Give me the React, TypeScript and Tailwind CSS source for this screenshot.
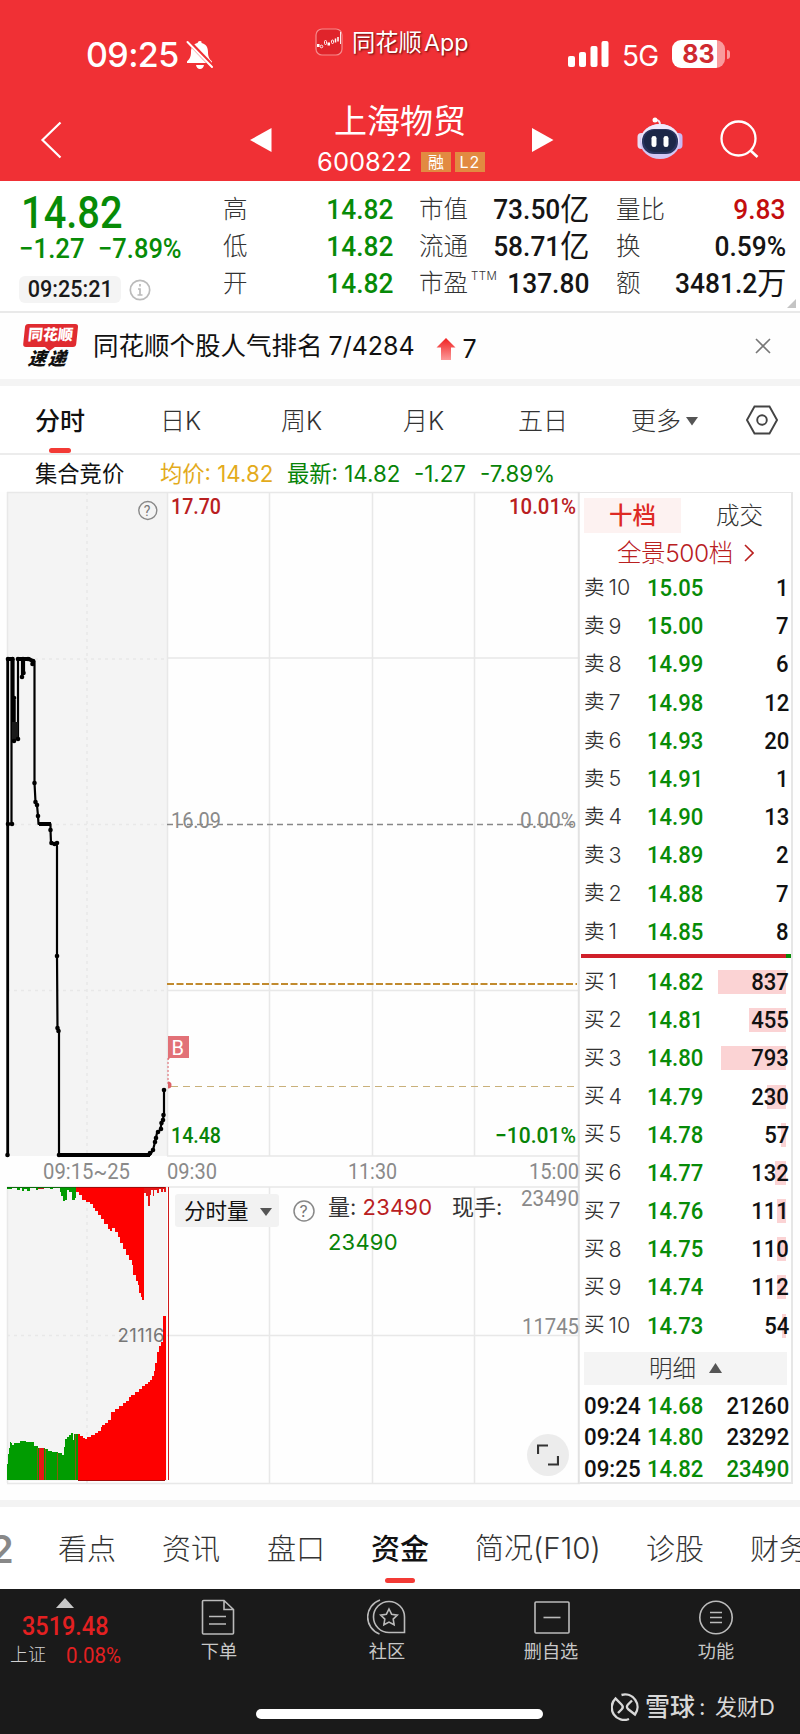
import React from 'react';

const UI = 'font-[Inter,"Noto_Sans_CJK_SC",sans-serif]';
const DIN = 'font-[Roboto,"Noto_Sans_CJK_SC",sans-serif]';

interface Level {
  label: string;
  price: string;
  qty: number;
  bar: number;
}

const asks: Level[] = [
  { label: '10', price: '15.05', qty: 1, bar: 0 },
  { label: '9', price: '15.00', qty: 7, bar: 0 },
  { label: '8', price: '14.99', qty: 6, bar: 0 },
  { label: '7', price: '14.98', qty: 12, bar: 0 },
  { label: '6', price: '14.93', qty: 20, bar: 0 },
  { label: '5', price: '14.91', qty: 1, bar: 0 },
  { label: '4', price: '14.90', qty: 13, bar: 0 },
  { label: '3', price: '14.89', qty: 2, bar: 0 },
  { label: '2', price: '14.88', qty: 7, bar: 0 },
  { label: '1', price: '14.85', qty: 8, bar: 0 },
];

const bids: Level[] = [
  { label: '1', price: '14.82', qty: 837, bar: 68 },
  { label: '2', price: '14.81', qty: 455, bar: 37 },
  { label: '3', price: '14.80', qty: 793, bar: 65 },
  { label: '4', price: '14.79', qty: 230, bar: 19 },
  { label: '5', price: '14.78', qty: 57, bar: 5 },
  { label: '6', price: '14.77', qty: 132, bar: 11 },
  { label: '7', price: '14.76', qty: 111, bar: 9 },
  { label: '8', price: '14.75', qty: 110, bar: 9 },
  { label: '9', price: '14.74', qty: 112, bar: 9 },
  { label: '10', price: '14.73', qty: 54, bar: 4 },
];

const ticks = [
  { time: '09:24', price: '14.68', qty: '21260', color: 'text-[#111]' },
  { time: '09:24', price: '14.80', qty: '23292', color: 'text-[#111]' },
  { time: '09:25', price: '14.82', qty: '23490', color: 'text-[#078307]' },
];

const StatusBar = () => (
  <div className="flex h-[96px] items-start text-white">
    <div className="ml-[86px] mt-[33px] flex h-[44px] w-[229px] items-center">
      <span className="w-[93px] text-[34px] font-[550] tracking-[-0.6px]">09:25</span>
      <svg className="ml-[7px]" width="28" height="30" viewBox="0 0 28 30">
        <path d="M14 1c-2 0-2 1.500-2.500 2C7 4 5 7 5 12c0 5-1.500 7-4 9.500V23h25v-1.500c-2.500-2.500-4-4.500-4-9.500 0-5-2-8-6.500-9C15.500 2.500 16 1 14 1zM10 25h8c-.5 2.500-2 4-4 4s-3.500-1.500-4-4z" fill="white" />
        <path d="M2 1l26 27" stroke="#f03035" strokeWidth="4.500" />
        <path d="M1.500 2l24.500 25" stroke="white" strokeWidth="2" strokeLinecap="round" />
      </svg>
    </div>
    <div className="mt-[26px] flex h-[32px] w-[253px] items-center">
      <svg width="28" height="28" viewBox="0 0 28 28">
        <rect x="1" y="1" width="26" height="26" rx="6" fill="#e0242b" stroke="#f58a8c" strokeWidth="1.200" />
        <path d="M2 17.500h2.500M12.500 16h2.500" stroke="white" strokeWidth="3" />
        <path d="M20.500 10.500v4M23 9v4.500" stroke="white" strokeWidth="1.500" />
        <g fill="none" stroke="white" strokeWidth="0.900">
          <circle cx="6.500" cy="18.500" r="1.300" />
          <rect x="9.500" y="12.500" width="2" height="4" rx="1" />
          <rect x="16.500" y="12" width="2" height="3.500" rx="1" />
          <path d="M25.500 4v12" />
        </g>
      </svg>
      <span className="ml-[9px] mt-[2px] text-[23.300px] [text-shadow:1px_1px_2px_rgba(60,0,0,0.8)]">同花顺<span className="ml-[2px]">App</span></span>
    </div>
    <div className="mt-[38px] flex h-[32px] items-center">
      <svg width="42" height="26" viewBox="0 0 42 26" fill="white">
        <rect x="0" y="15" width="7" height="11" rx="2" />
        <rect x="11" y="11" width="7" height="15" rx="2" />
        <rect x="22.500" y="5" width="7" height="21" rx="2" />
        <rect x="33.500" y="0" width="7" height="26" rx="2" />
      </svg>
      <span className="ml-[12px] mt-[3px] w-[39px] text-[28px] tracking-[-0.8px]">5G</span>
      <div className="ml-[11px] flex h-[28px] w-[53px] items-center justify-center rounded-[9px] bg-[linear-gradient(90deg,#fff_84%,#f99a9c_84%)]">
        <span className="text-[25px] font-bold leading-none text-[#cf2a30]">83</span>
      </div>
      <div className="ml-[2px] h-[9px] w-[3px] rounded-r-full bg-[#f99a9c]" />
    </div>
  </div>
);

const Robot = () => (
  <svg width="46" height="43" viewBox="0 0 46 43">
    <path d="M23 8c0-3-1-5-4-5" fill="none" stroke="#eee6f5" strokeWidth="2" />
    <circle cx="18" cy="3" r="2.500" fill="#fff" />
    <rect x="0.500" y="16" width="8" height="16" rx="4" fill="#e8dcf3" />
    <rect x="37.500" y="16" width="8" height="16" rx="4" fill="#c9b9f2" />
    <ellipse cx="23" cy="24.500" rx="20" ry="17.500" fill="#d3c6f4" />
    <ellipse cx="23" cy="22" rx="19" ry="15" fill="#efe9fb" />
    <rect x="5" y="12" width="36" height="25" rx="12" fill="#2b3560" />
    <rect x="7" y="13" width="32" height="22" rx="11" fill="#1d2748" />
    <rect x="14.500" y="19" width="5" height="11" rx="2.300" fill="white" />
    <rect x="26.500" y="19" width="5" height="11" rx="2.300" fill="white" />
  </svg>
);

const TitleBar = () => (
  <div className="flex h-[85px] items-start text-white">
    <svg className="ml-[40px] mt-[25px]" width="22" height="38" viewBox="0 0 22 38">
      <path d="M20.500 1.500L2.500 19l18 17.500" fill="none" stroke="white" strokeWidth="2.200" />
    </svg>
    <svg className="ml-[188px] mt-[32px]" width="22" height="24" viewBox="0 0 22 24">
      <path d="M0 12L21.500 0v24z" fill="white" />
    </svg>
    <div className="ml-[38px] mt-[6px] flex w-[180px] flex-col items-center">
      <div className="h-[47px] text-[33px] leading-[39px]">上海物贸</div>
      <div className="ml-[2px] flex h-[26px] items-center text-[25.500px]">
        <span className="mr-[9px]">600822</span>
        <span className="mr-[4px] h-[20px] w-[30px] bg-[#e28a41] text-center text-[16px] leading-[20px]">融</span>
        <span className="h-[20px] w-[30px] bg-[#e28a41] text-center text-[16px] leading-[20px] tracking-[1px]">L2</span>
      </div>
    </div>
    <svg className="ml-[42px] mt-[32px]" width="22" height="24" viewBox="0 0 22 24">
      <path d="M21.500 12L0 0v24z" fill="white" />
    </svg>
    <div className="ml-[83px] mt-[21px]"><Robot /></div>
    <svg className="ml-[37px] mt-[24px]" width="39" height="39" viewBox="0 0 39 39">
      <circle cx="18.500" cy="18.500" r="17" fill="none" stroke="white" strokeWidth="2.300" />
      <path d="M30.500 30.500l7 6.500" stroke="white" strokeWidth="2.600" />
    </svg>
  </div>
);

const StatRow = ({ label, sup, value, unit, color = 'text-[#151515]' }: { label: string; sup?: string; value: string; unit?: string; color?: string }) => (
  <div className="flex h-[37px] items-center justify-between">
    <span className="relative whitespace-nowrap text-[24.500px] font-light text-[#333]">
      {label}
      {sup && <span className="absolute left-full top-0 ml-[3px] text-[11.500px] tracking-[0.5px]">{sup}</span>}
    </span>
    <span className={`${DIN} flex origin-right scale-x-[0.94] items-center whitespace-nowrap text-[28px] font-medium ${color}`}>
      {value}
      {unit && <span className="text-[31px] font-normal leading-[28px]">{unit}</span>}
    </span>
  </div>
);

const Quote = () => (
  <div className="relative flex h-[132px] border-b-2 border-[#e9e9e9] bg-white">
    <div className={`w-[223px] pl-[21px] ${DIN} font-medium text-[#078b07]`}>
      <div className="h-[48px] origin-left scale-x-[0.885] pt-[9px] text-[45px] leading-[45px]">14.82</div>
      <div className="flex h-[40px] items-center whitespace-pre text-[28px] leading-[28px]">
        <span className="w-[77px]"><span className="-ml-[2px] inline-block origin-left scale-x-[0.92]">−1.27</span></span>
        <span className="inline-block origin-left scale-x-[0.91]">−7.89%</span>
      </div>
      <div className="mt-[7px] flex items-center">
        <div className="-ml-[2px] flex h-[27px] w-[102px] items-center justify-center rounded-[6px] bg-[#f4f4f4]">
          <span className="scale-x-[0.94] text-[23px] text-[#1a1a1a]">09:25:21</span>
        </div>
        <svg className="ml-[8px]" width="22" height="22" viewBox="0 0 22 22">
          <circle cx="11" cy="11" r="9.700" fill="none" stroke="#bbb" strokeWidth="1.700" />
          <path d="M11 5v2.500M9 10h2v6M8.500 16h5" fill="none" stroke="#bbb" strokeWidth="1.700" />
        </svg>
      </div>
    </div>
    <div className="w-[170px] pt-[10px]">
      <StatRow label="高" value="14.82" color="text-[#078b07]" />
      <StatRow label="低" value="14.82" color="text-[#078b07]" />
      <StatRow label="开" value="14.82" color="text-[#078b07]" />
    </div>
    <div className="ml-[26px] w-[170px] pt-[10px]">
      <StatRow label="市值" value="73.50" unit="亿" />
      <StatRow label="流通" value="58.71" unit="亿" />
      <StatRow label="市盈" sup="TTM" value="137.80" />
    </div>
    <div className="ml-[27px] w-[170px] pt-[10px]">
      <StatRow label="量比" value="9.83" color="text-[#c30d0d]" />
      <StatRow label="换" value="0.59%" />
      <StatRow label="额" value="3481.2" unit="万" />
    </div>
    <svg className="absolute bottom-[3px] right-[4px]" width="9" height="9"><path d="M9 0v9H0z" fill="#c4c4c4" /></svg>
  </div>
);

const Banner = () => (
  <div className="flex h-[66px] items-center bg-[#fefefe] text-[#111]">
    <div className="relative ml-[23px] w-[53px] -skew-x-6 text-center font-black">
      <div className="h-[23px] rounded-[3px] bg-[#e02b30] text-[15px] leading-[22px] text-white">同花顺</div>
      <div className="mx-auto h-0 w-0 border-x-[5px] border-t-[4px] border-x-transparent border-t-[#e02b30]" />
      <div className="-mt-[3px] h-[20px] text-[18px] italic leading-[21px] tracking-[2px]">速递</div>
    </div>
    <div className="ml-[17px] whitespace-nowrap text-[25.500px]">同花顺个股人气排名</div>
    <div className="ml-[6px] w-[100px] text-[25px]">7/4284</div>
    <svg className="ml-[7px] mt-[6px]" width="20" height="23" viewBox="0 0 20 23">
      <defs>
        <linearGradient id="rise" x1="0" y1="0" x2="0" y2="1">
          <stop offset="0" stopColor="#f02020" />
          <stop offset="1" stopColor="#fb9a9a" />
        </linearGradient>
      </defs>
      <path d="M10 0l9.500 9.500H15V22H5V9.500H.5z" fill="url(#rise)" />
    </svg>
    <div className="ml-[7px] mt-[7px] text-[25px]">7</div>
    <svg className="ml-auto mr-[29px]" width="16" height="16" viewBox="0 0 16 16">
      <path d="M1 1l14 14M15 1L1 15" stroke="#777" strokeWidth="1.600" />
    </svg>
  </div>
);

const PeriodTabs = () => (
  <div className="relative flex h-[69px] items-center border-b-2 border-[#ececec] bg-white pl-[35px] pt-[3px] text-[25px] font-light text-[#333]">
    <div className="w-[125px] shrink-0 font-medium text-[#111]">分时</div>
    <div className="w-[121px] shrink-0">日K</div>
    <div className="w-[122px] shrink-0">周K</div>
    <div className="w-[115px] shrink-0">月K</div>
    <div className="w-[113px] shrink-0">五日</div>
    <div className="flex w-[115px] shrink-0 items-center">
      更多
      <svg className="ml-[5px]" width="12" height="9"><path d="M0 0h12L6 8.500z" fill="#555" /></svg>
    </div>
    <svg className="-mt-[2px]" width="32" height="30" viewBox="0 0 32 30" fill="none" stroke="#444" strokeWidth="1.900">
      <path d="M8.500 1.500h15L31 15l-7.500 13.500h-15L1 15z" />
      <circle cx="16" cy="15" r="4.800" />
    </svg>
    <div className="absolute bottom-0 left-[49px] h-[5px] w-[22px] rounded-full bg-[#f33a35]" />
  </div>
);

const PriceLegend = () => (
  <div className="flex h-[37px] items-center bg-white pl-[35px] pt-[2px] text-[22.300px] text-[#111]">
    <div className="w-[125px]">集合竞价</div>
    <div className="w-[127px] text-[#e3ab1c]">均价: 14.82</div>
    <div className="w-[127px] text-[#078307]">最新: 14.82</div>
    <div className="w-[66px] text-[#078307]">-1.27</div>
    <div className="text-[#078307]">-7.89%</div>
  </div>
);

// auction trail, [x, y] in chart space
const trail =
  '34.5,661 34.5,783 35.5,802 37,805 38,816 38.5,824 50.5,824 50.5,830 51,843 56,843 57,846 57,956 57.5,1029 59,1030 59,1155 150,1155 153,1150 155,1142 157,1133 160,1130 162,1122 164,1115 164,1090';
const dots: [number, number][] = [
  [8, 659], [12.500, 659], [18, 659], [23, 659], [28, 659], [33, 661], [32.500, 664], [22, 677], [23.500, 673],
  [14, 698], [14, 741], [18, 739], [12, 824], [8, 824], [34.500, 783], [35.500, 802], [37, 805], [38, 816],
  [50.500, 830], [51.500, 843], [54.500, 844], [57, 843], [57, 956], [57.500, 1028], [58.500, 1031], [59, 1155],
  [7.500, 1155], [150, 1153], [153, 1150], [155, 1142], [156, 1138], [158, 1132], [161, 1129], [161.500, 1123],
  [163, 1120], [163.500, 1115], [164, 1090],
];
const gridX = [269, 372, 474];

const PriceLabel = ({ x, y, w, fill, children }: { x: number; y: number; w: number; fill: string; children: string }) => (
  <text x={x} y={y} textLength={w} lengthAdjust="spacingAndGlyphs" fill={fill}>{children}</text>
);

const Chart = () => (
  <div className="relative h-[993px] w-[580px]">
    <svg className={`block overflow-visible ${DIN} text-[22.500px]`} width="580" height="993" viewBox="0 492 580 993">
      <rect x="7" y="492" width="160" height="664" fill="#f4f4f4" />
      <rect x="7" y="1187" width="160" height="294" fill="#f4f4f4" />
      <g stroke="#e8e8e8" strokeWidth="1.500" fill="none">
        <path d="M7 492.500H580M167 658H580M167 990.500H580M167 1156H580M7 1187H580M167 1335.500H580M7 1483.500H580" />
        <path d="M167.500 492V1156" />
        {gridX.map((x) => (
          <path key={x} d={`M${x + 0.5} 492V1156M${x + 0.5} 1187V1483`} />
        ))}
        <path d="M7.500 492V1156M7.500 1187V1483" />
        <path d="M7 659H167M7 824.500H167M7 990.500H167M7 1335.500H167M87 492V1156M87 1187V1483" strokeDasharray="3 4" />
      </g>
      <path d="M578.800 492V1484" stroke="#e2e2e2" strokeWidth="2" />
      <path d="M167 824.500H577" stroke="#888" strokeWidth="1.500" strokeDasharray="6 4" />
      <path d="M167 984H577" stroke="#c18a2e" strokeWidth="2.200" strokeDasharray="7 2.500" />
      <path d="M171 1086.500H577" stroke="#c9b07a" strokeWidth="1.200" strokeDasharray="7 5" />
      <g stroke="#000" strokeWidth="2.200" fill="none" strokeLinejoin="round">
        <path d="M7.700 659V1156" strokeWidth="2.800" />
        <path d="M11.500 659V824M13.500 659V741M18 659V740M7 824H13M22 659V677M24 659V673" />
        <path d="M7 659H14M17 659H29L34.500 662" strokeWidth="4" />
        <path d="M39 824H51M59 1155H150" strokeWidth="4" />
        <path d="M14 700V740" strokeWidth="3.500" />
        <path d="M15 722V740" strokeWidth="6" stroke="#1a1a1a" />
        <polyline points={trail} />
      </g>
      {dots.map(([x, y]) => (
        <circle key={`${x}-${y}`} cx={x} cy={y} r="2.300" />
      ))}
      <path d="M168 1058V1086" stroke="#e49095" strokeWidth="1.500" strokeDasharray="2 2" />
      <path d="M168 1081.500a3.500 3.500 0 0 1 0 7z" fill="#dd6067" />
      <path d="M168 1036h21v22h-19l-2 2z" fill="#e27177" />
      <text x="171.500" y="1055" fontSize="20" fill="#fff">B</text>
      <g fontWeight="500">
        <PriceLabel x={171} y={514} w={50} fill="#b9201f">17.70</PriceLabel>
        <PriceLabel x={509} y={514} w={67} fill="#b9201f">10.01%</PriceLabel>
        <PriceLabel x={171} y={1143} w={50} fill="#078307">14.48</PriceLabel>
        <PriceLabel x={495} y={1143} w={81} fill="#078307">−10.01%</PriceLabel>
      </g>
      <g>
        <PriceLabel x={171} y={828} w={50} fill="#8a8a8a">16.09</PriceLabel>
        <PriceLabel x={520} y={828} w={56} fill="#8a8a8a">0.00%</PriceLabel>
        <PriceLabel x={43} y={1179} w={87} fill="#8a8a8a">09:15~25</PriceLabel>
        <PriceLabel x={167} y={1179} w={50} fill="#8a8a8a">09:30</PriceLabel>
        <PriceLabel x={348} y={1179} w={49} fill="#8a8a8a">11:30</PriceLabel>
        <PriceLabel x={529} y={1179} w={50} fill="#8a8a8a">15:00</PriceLabel>
        <PriceLabel x={521} y={1206} w={58} fill="#8a8a8a">23490</PriceLabel>
        <PriceLabel x={522} y={1334} w={57} fill="#8a8a8a">11745</PriceLabel>
      </g>
      <circle cx="147.800" cy="510.500" r="9" fill="none" stroke="#888" strokeWidth="1.400" />
      <text x="143.800" y="516" fontSize="14" fill="#777">?</text>

      {/* unmatched volume hanging from the top */}
      <g shapeRendering="crispEdges">
        <path d="M7 1187H76V1198H75V1200H72V1192H69V1190H67V1200H65V1201H63V1196H61V1192H60V1188H53V1189H50V1188H38V1190H36V1188H30V1191H27V1189H24V1191H22V1188H20V1190H17V1188H12V1189H7z" fill="#019c01" />
        <path d="M38 1187H44V1189H38z" fill="#b92020" />
        <path d="M76 1187V1192H79V1195H82V1200H86V1202H90V1204H93V1208H95V1211H98V1215H101V1219H104V1224H108V1229H110V1231H112V1228H115V1232H118V1237H120V1243H123V1249H126V1255H129V1260H132V1265H133V1275H136V1281H138V1285H139V1293H141V1297H142V1300H144V1187z" fill="#fe0000" />
        <path d="M144 1187V1193H146V1196H148V1206H150V1195H151V1190H153V1196H154V1190H157V1193H159V1189H161V1192H163V1189H164V1192H165.500V1187z" fill="#e81515" />
        <path d="M6.500 1480V1466L7.500 1464V1458L8.500 1454V1448H10V1442L12 1443V1445H14V1443H20V1441H26V1442H34V1446H38V1448H45V1449H48V1451H52V1452H58V1453H62V1455H64V1447H65V1439H67V1437H69V1435H71V1433H73V1440H74V1434H78V1480z" fill="#019c01" />
        <path d="M39 1448H44V1480H39z" fill="#e81515" />
        <path d="M37.500 1448V1480M45.500 1449V1480M57.500 1453V1480M75.500 1434V1480" stroke="#8a5a0c" strokeWidth="1.500" />
        <path d="M78 1480V1434H80V1436H83V1438H85V1439H87V1437H91V1435H95V1433H98V1431H101V1427H102V1425H105V1423H108V1420H111V1412H115V1409H119V1406H123V1403H126V1401H129V1397H131V1395H135V1392H139V1389H142V1386H145V1384H148V1382H150V1380H152V1376H154V1371H155V1363H157V1352H159V1346H161V1342H163V1316H165.500V1480z" fill="#fe0000" />
        <path d="M7 1187.500H76" stroke="#0b6d0b" />
        <path d="M76 1187.500H165M78 1480H165" stroke="#a30a0a" />
        <path d="M168.500 1187V1480" stroke="#d01919" strokeWidth="1.500" />
      </g>
      <text x="117.500" y="1342" className={UI} fontSize="18.500" textLength="47" fill="#777">21116</text>
    </svg>

    <div className="absolute left-[175px] top-[702px] flex h-[33px] w-[104px] items-center rounded-[3px] bg-[#f2f2f2] pl-[9px] pt-[2px] text-[21.500px] text-[#111]">
      分时量
      <svg className="ml-[11px]" width="12" height="8"><path d="M0 0h12L6 8z" fill="#555" /></svg>
    </div>
    <svg className="absolute left-[293px] top-[708px]" width="22" height="22" viewBox="0 0 22 22">
      <circle cx="11" cy="11" r="10" fill="none" stroke="#888" strokeWidth="1.500" />
      <text x="6.500" y="17" fontSize="16" fill="#777" className={UI}>?</text>
    </svg>
    <div className="absolute left-[328px] top-[698px] flex w-[180px] flex-wrap text-[22px] leading-[35px] text-[#333]">
      <span className="w-[124px]">量: <span className="tracking-[0.2px] text-[#b9201f]">23490</span></span>
      <span className="w-[56px] whitespace-nowrap">现手:</span>
      <span className="tracking-[0.2px] text-[#078307]">23490</span>
    </div>
    <div className="absolute left-[527px] top-[942px] flex size-[42px] items-center justify-center rounded-full bg-[#ececec]">
      <svg width="22" height="22" viewBox="0 0 22 22" fill="none" stroke="#333" strokeWidth="2.200">
        <path d="M1 10V1.500h10M21 12v8.500H11" />
      </svg>
    </div>
  </div>
);

const LevelRow = ({ side, level }: { side: string; level: Level }) => (
  <div className="relative flex h-[38.200px] items-center">
    <div className="flex w-[63px] items-center whitespace-nowrap text-[21.500px] font-light text-[#333]">
      <span className="mr-[4px] text-[20.500px] font-[350]">{side}</span>{level.label}
    </div>
    <div className={`${DIN} origin-left scale-x-[0.92] text-[24px] font-medium text-[#078b07]`}>{level.price}</div>
    <div className="absolute right-[5px] h-[24px] bg-[#fbd3d4]" style={{ width: level.bar }} />
    <div className={`${DIN} relative ml-auto mr-[2px] origin-right scale-x-[0.92] text-[24px] font-medium text-[#111]`}>{level.qty}</div>
  </div>
);

const OrderBook = () => (
  <div className="h-[992px] w-[213px] border-b-2 border-r-2 border-t border-[#e6e6e6] bg-white pl-[4px]">
    <div className="flex pt-[5px] text-[23.500px] leading-[35px]">
      <div className="w-[97px] bg-[#fdf2f1] text-center font-medium text-[#de2a24]">十档</div>
      <div className="flex-1 pl-[7px] text-center font-light text-[#333]">成交</div>
    </div>
    <div className="flex h-[36px] items-center pl-[33px] pt-[4px] text-[24.500px] font-light text-[#b9201f]">
      <span className="tracking-[-0.4px]">全景500档</span>
      <svg className="ml-[11px]" width="10" height="18" viewBox="0 0 10 18">
        <path d="M1 1l8 8-8 8" fill="none" stroke="#b9201f" strokeWidth="1.600" />
      </svg>
    </div>
    {asks.map((level) => <LevelRow key={level.label} side="卖" level={level} />)}
    <div className="-ml-[3px] mb-[5px] mt-[3px] flex h-[4px]">
      <div className="flex-1 bg-[#d0202a]" />
      <div className="w-[5px] bg-[#078b07]" />
    </div>
    {bids.map((level) => <LevelRow key={level.label} side="买" level={level} />)}
    <div className="mb-[5px] mr-[4px] mt-[7px] flex h-[33px] items-center justify-center bg-[#f4f4f4] text-[23.500px] font-light text-[#333]">
      明细
      <svg className="ml-[13px]" width="13" height="10"><path d="M0 10h13L6.500 0z" fill="#555" /></svg>
    </div>
    {ticks.map((t, i) => (
      <div key={i} className={`flex h-[31.500px] items-center ${DIN} text-[24px] font-medium text-[#111]`}>
        <span className="w-[63px]"><span className="inline-block origin-left scale-x-[0.93]">{t.time}</span></span>
        <span className="origin-left scale-x-[0.92] text-[#078b07]">{t.price}</span>
        <span className={`ml-auto mr-[2px] origin-right scale-x-[0.92] ${t.color}`}>{t.qty}</span>
      </div>
    ))}
  </div>
);

const SectionTabs = () => (
  <div className="relative flex h-[82px] items-center overflow-hidden whitespace-nowrap bg-white pt-[2px] text-[29px] font-light text-[#333]">
    <div className="h-[40px] w-[58px] shrink-0 text-[38px] font-semibold leading-[40px] text-[#888]"><span className="-ml-[10px]">2</span></div>
    <div className="w-[104px] shrink-0">看点</div>
    <div className="w-[105px] shrink-0">资讯</div>
    <div className="w-[104px] shrink-0">盘口</div>
    <div className="w-[104px] shrink-0 font-medium text-[#111]">资金</div>
    <div className="w-[171px] shrink-0">简况<span className="text-[29.500px]">(F10)</span></div>
    <div className="w-[104px] shrink-0">诊股</div>
    <div className="shrink-0">财务</div>
    <div className="absolute bottom-[6px] left-[385px] h-[5px] w-[30px] rounded-full bg-[#f33a35]" />
  </div>
);

const NavItem = ({ label, children }: { label: string; children: React.ReactNode }) => (
  <div className="flex w-[100px] flex-col items-center">
    <svg width="40" height="38" viewBox="0 0 40 38" fill="none" stroke="#bbb" strokeWidth="1.600">{children}</svg>
    <span className="mt-[2px] text-[18.200px] leading-[26px] text-[#c8c8c8]">{label}</span>
  </div>
);

const BottomNav = () => (
  <div className="relative flex h-[145px] bg-[#1a1a1a] pt-[9px]">
    <div className={`w-[169px] pl-[10px] ${DIN} font-medium text-[#e32021]`}>
      <svg className="ml-[46px]" width="18" height="10"><path d="M0 10h18L9 0z" fill="#c8c8c8" /></svg>
      <div className="ml-[12px] mt-[3px] h-[30px] origin-left scale-x-[0.92] text-[25.500px] leading-[30px]">3519.48</div>
      <div className="mt-[2px] flex items-center text-[22.500px] leading-[24px]">
        <span className="w-[56px] text-[18px] font-light text-[#d0d0d0]">上证</span>
        <span className="origin-left scale-x-[0.91] font-normal">0.08%</span>
      </div>
    </div>
    <NavItem label="下单">
      <path d="M4.500 2.500H25L34.500 11.500V35a1 1 0 0 1-1 1H4.500a1 1 0 0 1-1-1V3.500a1 1 0 0 1 1-1zM25 2.500V11.500H34.500M10 18.500H27M10 26H27" />
    </NavItem>
    <div className="w-[68px]" />
    <NavItem label="社区">
      <path d="M22 3.500a15.500 15.500 0 0 1 15.500 15.500V34.500H22a15.500 15.500 0 0 1 0-31z" />
      <path d="M13 2A18 18 0 0 0 12.500 36" />
      <path d="M22 11l2.600 5.200 5.700.9-4.100 4 .9 5.700-5.100-2.700-5.100 2.700.9-5.700-4.100-4 5.700-.9z" />
    </NavItem>
    <div className="w-[64px]" />
    <NavItem label="删自选">
      <rect x="4" y="4" width="34" height="31" rx="1" />
      <path d="M12.500 19.500H29.500" />
    </NavItem>
    <div className="w-[65px]" />
    <NavItem label="功能">
      <circle cx="20" cy="19.500" r="16.200" />
      <path d="M14 14.500H26M14 19.500H26M14 24.500H26" />
    </NavItem>
    <div className="absolute bottom-[15px] left-[256px] h-[10px] w-[287px] rounded-full bg-white" />
    <div className="absolute bottom-[13px] left-[611px] flex items-center whitespace-nowrap text-[22.500px] text-[#d8d8d8]">
      <svg width="28" height="28" viewBox="0 0 28 28" fill="none" stroke="#d8d8d8" strokeWidth="2.400">
        <path d="M10.500 2A12.500 12.500 0 0 1 24 21.500L17.500 16.500c-2-1.500-2-3.500-.5-5L21 7.500" />
        <path d="M18 26A12.500 12.500 0 0 1 4.500 5.500L10.500 11.500c1.500 1.500 1.500 3.500 0 5L7 20" />
      </svg>
      <span className="ml-[6px] text-[25px] font-medium">雪球</span>
      <span className="ml-[4px] w-[16px]">:</span>
      <span className="text-[22px]">发财D</span>
    </div>
  </div>
);

export default function App() {
  return (
    <div className={`h-[1734px] w-[800px] overflow-hidden bg-[#fefefe] leading-none ${UI}`}>
      <div className="bg-[#f03035]">
        <StatusBar />
        <TitleBar />
      </div>
      <Quote />
      <Banner />
      <div className="h-[7px] bg-[#f4f4f4]" />
      <PeriodTabs />
      <PriceLegend />
      <div className="flex h-[1008px]">
        <Chart />
        <OrderBook />
      </div>
      <div className="h-[7px] bg-[#f3f3f3]" />
      <SectionTabs />
      <BottomNav />
    </div>
  );
}
